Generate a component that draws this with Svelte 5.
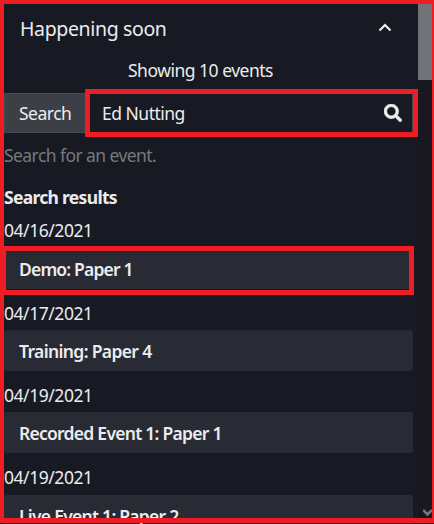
<script>
  const events = [
    { date: '04/16/2021', title: 'Demo: Paper 1', ls: -0.83, marked: true },
    { date: '04/17/2021', title: 'Training: Paper 4', ls: -0.64 },
    { date: '04/19/2021', title: 'Recorded Event 1: Paper 1', ls: -0.74 },
    { date: '04/19/2021', title: 'Live Event 1: Paper 2', ls: -0.74 }
  ];
</script>

<div class="panel">
  <main>
    <header>
      <h2>Happening soon</h2>
      <svg width="14" height="10" viewBox="0 0 14 10"><path d="M1.500 7.500 7 2l5.500 5.500" fill="none" stroke="#eee" stroke-width="2.200" /></svg>
    </header>
    <p class="count">Showing 10 events</p>
    <div class="search">
      <span class="label">Search</span>
      <div class="field">
        <span>Ed Nutting</span>
        <svg width="18" height="18" viewBox="0 0 512 512"><path fill="#eee" stroke="#eee" stroke-width="14" d="M505 442.700 405.300 343c-4.500-4.500-10.600-7-17-7H372c27.600-35.300 44-79.700 44-128C416 93.100 322.900 0 208 0S0 93.100 0 208s93.100 208 208 208c48.300 0 92.700-16.400 128-44v16.300c0 6.400 2.500 12.500 7 17l99.700 99.700c9.400 9.400 24.600 9.400 33.900 0l28.300-28.300c9.400-9.400 9.400-24.600.1-34zM208 336c-70.700 0-128-57.200-128-128 0-70.700 57.200-128 128-128 70.700 0 128 57.200 128 128 0 70.700-57.200 128-128 128z" /></svg>
        <i class="mark"></i>
      </div>
    </div>
    <p class="help">Search for an event.</p>
    <h3>Search results</h3>
    <ul>
      {#each events as e}
        <li>
          <time>{e.date}</time>
          <div class="event">
            <span style="letter-spacing: {e.ls}px">{e.title}</span>
            {#if e.marked}<i class="mark"></i>{/if}
          </div>
        </li>
      {/each}
    </ul>
  </main>
  <aside>
    <div class="thumb"></div>
    <svg width="9" height="9" viewBox="0 0 9 9"><path d="M0 1l4.500 4.500L9 1" fill="none" stroke="#77777b" stroke-width="2.600" /></svg>
  </aside>
  <div class="frame"></div>
</div>

<style>
  :global(body) { background: #181a23; }
  .panel {
    position: relative;
    width: 434px;
    height: 524px;
    box-sizing: border-box;
    padding: 4px 2px 0 4px;
    overflow: hidden;
    display: flex;
    background: #181a23;
    color: #ececee;
    font: 17.5px/26px "Noto Sans", "Open Sans", sans-serif;
  }
  h2, h3, p, ul { margin: 0; padding: 0; }
  main { width: 414px; flex: none; }
  header {
    height: 50px;
    box-sizing: border-box;
    padding: 0 26px 0 16px;
    display: flex;
    align-items: center;
    justify-content: space-between;
  }
  header svg { margin-top: -3px; }
  h2 { font-size: 19.5px; font-weight: 400; letter-spacing: -0.36px; }
  .count { height: 39px; padding-left: 124px; line-height: 33px; letter-spacing: -0.5px; }
  .search { display: flex; height: 40px; width: 409px; }
  .label {
    width: 85px;
    box-sizing: border-box;
    border: 1px solid #474a50;
    background: #3c3f46;
    padding-left: 14px;
    line-height: 38px;
    letter-spacing: -0.5px;
  }
  .field {
    position: relative;
    flex: 1;
    box-sizing: border-box;
    border-right: 1px solid #45484f;
    padding: 0 10px 0 13px;
    display: flex;
    align-items: center;
    justify-content: space-between;
    letter-spacing: -0.5px;
  }
  .mark { position: absolute; border: 5px solid #ee1c23; box-sizing: border-box; }
  .field .mark { left: -4px; top: -4px; width: 333px; height: 48px; }
  .help { height: 44px; line-height: 45px; color: #77797e; letter-spacing: -0.57px; }
  h3 { font-size: 17.5px; line-height: 41px; height: 29.4px; font-weight: 700; letter-spacing: -0.7px; }
  li { list-style: none; height: 82.3px; display: flex; flex-direction: column; }
  time { flex: 1; line-height: 48px; height: 41px; letter-spacing: -0.45px; }
  .event {
    position: relative;
    width: 409px;
    height: 41px;
    box-sizing: border-box;
    padding-left: 15px;
    border-radius: 3px;
    background: #292b34;
    line-height: 42px;
    font-weight: 600;
    white-space: nowrap;
  }
  .event .mark { left: -3px; top: -2px; width: 413px; height: 49px; }
  aside {
    width: 14px;
    background: #191820;
    display: flex;
    flex-direction: column;
    justify-content: space-between;
    align-items: flex-end;
  }
  .thumb { width: 14px; height: 76px; background: #727378; }
  aside svg { margin-bottom: 6px; }
  .frame {
    position: absolute;
    left: 0;
    top: 0;
    width: 434px;
    height: 523px;
    box-sizing: border-box;
    border: solid #ee1c23;
    border-width: 4px 2px 5px 4px;
  }
</style>
